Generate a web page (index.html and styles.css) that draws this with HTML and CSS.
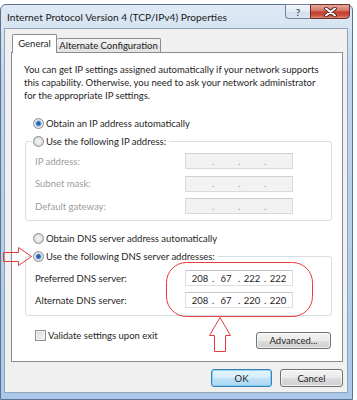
FILE: index.html
```html
<!DOCTYPE html>
<html>
<head>
<meta charset="utf-8">
<title>Internet Protocol Version 4 (TCP/IPv4) Properties</title>
<link rel="stylesheet" href="styles.css">
</head>
<body>
<div class="window">
  <div class="titlebar">
    <span class="title">Internet Protocol Version 4 (TCP/IPv4) Properties</span>
    <div class="caption">
      <div class="cap-help">?</div>
      <div class="cap-close">
        <svg width="13" height="10" viewBox="0 0 13 10"><path d="M2 1.5 L11 8.5 M11 1.5 L2 8.5" stroke="#4a1c1c" stroke-width="3.6" stroke-linecap="round"/><path d="M2 1.5 L11 8.5 M11 1.5 L2 8.5" stroke="#ffffff" stroke-width="2" stroke-linecap="round"/></svg>
      </div>
    </div>
  </div>
  <div class="client">
    <div class="tabs">
      <div class="tab tab-general active">General</div>
      <div class="tab tab-alt">Alternate Configuration</div>
    </div>
    <div class="panel">
      <p class="intro">You can get IP settings assigned automatically if your network supports<br>this capability. Otherwise, you need to ask your network administrator<br>for the appropriate IP settings.</p>
      <div class="option opt-ip"><span class="radio checked"></span><span>Obtain an IP address automatically</span></div>
      <div class="group group-ip">
        <div class="legend"><span class="radio"></span><span>Use the following IP address:</span></div>
        <div class="field field-first"><span class="label disabled">IP address:</span>
          <div class="ipbox disabled"><span class="oct"></span><span class="dot">.</span><span class="oct"></span><span class="dot">.</span><span class="oct"></span><span class="dot">.</span><span class="oct"></span></div>
        </div>
        <div class="field"><span class="label disabled">Subnet mask:</span>
          <div class="ipbox disabled"><span class="oct"></span><span class="dot">.</span><span class="oct"></span><span class="dot">.</span><span class="oct"></span><span class="dot">.</span><span class="oct"></span></div>
        </div>
        <div class="field"><span class="label disabled">Default gateway:</span>
          <div class="ipbox disabled"><span class="oct"></span><span class="dot">.</span><span class="oct"></span><span class="dot">.</span><span class="oct"></span><span class="dot">.</span><span class="oct"></span></div>
        </div>
      </div>
      <div class="option opt-dns"><span class="radio"></span><span>Obtain DNS server address automatically</span></div>
      <div class="group group-dns">
        <div class="legend"><span class="radio checked"></span><span>Use the following DNS server addresses:</span></div>
        <div class="field field-dns1"><span class="label">Preferred DNS server:</span>
          <div class="ipbox"><span class="oct">208</span><span class="dot">.</span><span class="oct">67</span><span class="dot">.</span><span class="oct">222</span><span class="dot">.</span><span class="oct">222</span></div>
        </div>
        <div class="field field-dns2"><span class="label">Alternate DNS server:</span>
          <div class="ipbox"><span class="oct">208</span><span class="dot">.</span><span class="oct">67</span><span class="dot">.</span><span class="oct">220</span><span class="dot">.</span><span class="oct">220</span></div>
        </div>
      </div>
      <div class="footer-row">
        <div class="check"><span class="checkbox"></span><span>Validate settings upon exit</span></div>
        <button class="btn btn-adv">Advanced...</button>
      </div>
    </div>
    <div class="dialog-buttons">
      <button class="btn btn-ok">OK</button>
      <button class="btn btn-cancel">Cancel</button>
    </div>
  </div>
</div>
<svg class="annot" width="357" height="400" viewBox="0 0 357 400">
  <path d="M3.5 252.5 H18.5 V247.5 L31.5 256.5 L18.5 265.5 V261.5 H3.5 Z" fill="none" stroke="#e53b3b" stroke-width="1"/>
  <rect x="166.5" y="262.5" width="146" height="54" rx="20" ry="20" fill="none" stroke="#e53b3b" stroke-width="1"/>
  <path d="M220 317.5 L230.5 335.5 H225.5 V351.5 H214.5 V335.5 H209.5 Z" fill="none" stroke="#e53b3b" stroke-width="1"/>
</svg>
</body>
</html>
```

FILE: styles.css
```css
* { box-sizing: border-box; }
html, body { margin: 0; padding: 0; }
body {
  width: 357px;
  height: 400px;
  overflow: hidden;
  background: #ffffff;
  font-family: Lato, "Noto Sans", sans-serif;
  font-size: 9.5px;
  color: #1e1e1e;
  position: relative;
}

.window {
  margin-top: 4px;
  width: 353px;
  height: 396px;
  border: 1px solid #5b7393;
  border-radius: 6px 6px 0 0;
  padding: 0 4px 6px 3px;
  background: linear-gradient(#e0eaf6 0, #d6e3f2 24px, #bfd5ee 70px, #abc8e9 100%);
  display: flex;
  flex-direction: column;
}

.titlebar {
  height: 23px;
  flex: none;
  display: flex;
  align-items: center;
  padding-left: 3px;
}
.title { font-size: 10.2px; color: #1a1a1a; white-space: nowrap; }

.caption {
  margin-left: auto;
  margin-right: -2px;
  margin-top: -1px;
  align-self: flex-start;
  display: flex;
  height: 15px;
}
.cap-help {
  width: 25px;
  height: 15px;
  border: 1px solid #70829c;
  border-right: none;
  border-radius: 0 0 0 4px;
  background: linear-gradient(#f4f7fb, #e2eaf3 50%, #d2ddea 51%, #dfe8f2);
  display: flex;
  align-items: center;
  justify-content: center;
  font-weight: bold;
  font-size: 10px;
  color: #4b5a70;
}
.cap-close {
  width: 40px;
  height: 15px;
  border: 1px solid #6b2f2f;
  border-radius: 0 0 4px 0;
  background: linear-gradient(#e8a898, #d77464 45%, #c4412f 52%, #c9503d 80%, #dc8a76);
  display: flex;
  align-items: center;
  justify-content: center;
}

.client {
  flex: 1;
  background: #f0f0f0;
  border: 1px solid #93a3b7;
  padding: 5px 4px 0 6px;
  display: flex;
  flex-direction: column;
}

.tabs {
  display: flex;
  align-items: flex-end;
  height: 19px;
  margin-bottom: -1px;
  padding-left: 1px;
  position: relative;
  z-index: 1;
}
.tab {
  height: 14px;
  margin-bottom: 1px;
  border: 1px solid #898c95;
  border-bottom: none;
  border-radius: 2px 2px 0 0;
  background: linear-gradient(#f3f3f3, #ececec 50%, #e0e0e0 51%, #e6e6e6);
  display: flex;
  align-items: center;
  justify-content: center;
  white-space: nowrap;
}
.tab.active {
  height: 19px;
  margin-bottom: 0;
  background: #ffffff;
  padding-bottom: 2px;
}
.tab-general { width: 45px; }
.tab-alt { width: 104px; border-left: none; }

.panel {
  width: 332px;
  height: 310px;
  flex: none;
  background: #ffffff;
  border: 1px solid #898c95;
}

.intro {
  margin: 0 0 0 12px;
  padding-top: 10px;
  line-height: 13px;
  white-space: nowrap;
}

.option {
  display: flex;
  align-items: center;
  height: 13px;
  margin-left: 21px;
  white-space: nowrap;
}
.opt-ip { margin-top: 14.5px; }
.opt-dns { margin-top: 10.5px; }

.radio {
  width: 11px;
  height: 11px;
  flex: none;
  border-radius: 50%;
  border: 1px solid #8e8f8f;
  background: radial-gradient(circle at 50% 50%, #f6f6f6 0, #e6e6e6 3px, #d2d2d2 5px);
  margin-right: 2px;
}
.radio.checked {
  background: radial-gradient(circle at 50% 50%, #1d57a3 0, #2c6cbd 1.8px, #8db6e4 2.6px, #dfe6ee 3.4px, #e8e8e8 4px, #d4d4d4 5px);
}

.group {
  margin-left: 13px;
  width: 307px;
  border: 1px solid #d5dfe5;
  border-radius: 3px;
}
.group-ip { margin-top: 11.5px; padding-bottom: 6px; }
.group-dns { margin-top: 11.5px; padding-bottom: 7px; }

.legend {
  display: flex;
  align-items: center;
  width: max-content;
  height: 13px;
  margin-top: -7px;
  margin-left: 6px;
  padding: 0 3px 0 1px;
  background: #ffffff;
  white-space: nowrap;
}

.field {
  display: flex;
  align-items: center;
  height: 16px;
  padding-left: 9px;
  margin-top: 6.5px;
}
.field-first { margin-top: 5px; }
.field-dns1 { margin-top: 7px; }
.field-dns2 { margin-top: 6px; }

.label { width: 150px; white-space: nowrap; }
.label.disabled { color: #9c9c9c; }

.ipbox {
  width: 108px;
  height: 16px;
  display: flex;
  align-items: center;
  padding-left: 2px;
  background: #ffffff;
  border: 1px solid #dcdfe4;
  border-top-color: #c4c7cc;
}
.ipbox.disabled {
  background: #f2f2f2;
  border-color: #dadada;
  border-top-color: #cfcfcf;
  color: #9c9c9c;
}
.oct { width: 24px; text-align: center; }
.dot { width: 2px; display: flex; justify-content: center; }

.footer-row {
  display: flex;
  align-items: flex-start;
  margin-top: 14px;
}
.check {
  display: flex;
  align-items: center;
  height: 11px;
  margin-left: 23px;
  white-space: nowrap;
}
.checkbox {
  width: 11px;
  height: 11px;
  flex: none;
  border: 1px solid #8e8f8f;
  background: linear-gradient(135deg, #d8d8d8, #f6f6f6);
  box-shadow: inset 0 0 0 1px #f4f4f4;
  margin-right: 2px;
}

.btn {
  font: inherit;
  color: #1e1e1e;
  padding: 0;
  height: 17px;
  border: 1px solid #707070;
  border-radius: 3px;
  background: linear-gradient(#f2f2f2 0, #ebebeb 50%, #dddddd 51%, #cfcfcf 100%);
  box-shadow: inset 0 0 0 1px rgba(255,255,255,0.7);
}
.btn-adv {
  width: 75px;
  margin-left: auto;
  margin-right: 11px;
  margin-top: 1.5px;
}

.dialog-buttons {
  width: 332px;
  display: flex;
  justify-content: flex-end;
  gap: 8px;
  margin-top: 7px;
}
.btn-ok {
  width: 61px;
  height: 18px;
  border-color: #3c7fb1;
  background: linear-gradient(#e5f4fc, #d5eefb 50%, #bfe3f7 51%, #acd8f2);
  box-shadow: inset 0 0 0 1px rgba(120, 205, 245, 0.8);
}
.btn-cancel {
  width: 63px;
  height: 18px;
}

.annot {
  position: absolute;
  left: 0;
  top: 0;
  pointer-events: none;
}
```
